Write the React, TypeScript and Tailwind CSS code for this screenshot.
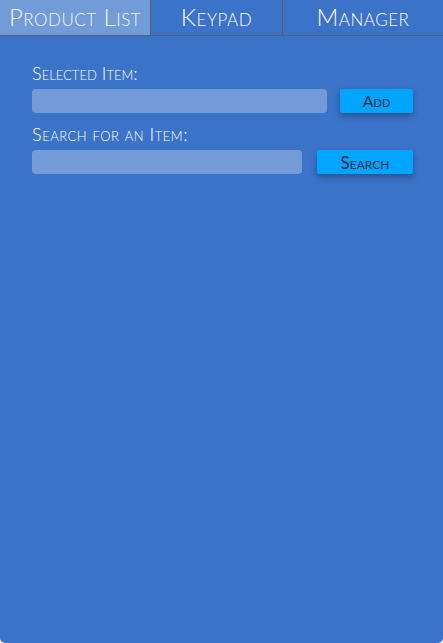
export default function App() {
  const font = { fontFamily: "Lato, 'DejaVu Sans', sans-serif" };
  return (
    <main
      className="w-[443px] h-[643px] bg-[#3b73c8] rounded-b-[5px] overflow-hidden text-white flex flex-col"
      style={font}
    >
      <nav className="flex h-[36px] border-b border-[#5a5f6a]">
        <div className="w-[151px] bg-[#729cd8] border-r border-[#5a5f6a] flex items-center justify-center pb-[2px] text-[24px] tracking-[0.5px] font-light [font-variant:small-caps] text-[#f4f7fc]">
          Product List
        </div>
        <div className="w-[132px] border-r border-[#5a5f6a] flex items-center justify-center pb-[2px] text-[24px] tracking-[0.5px] font-light [font-variant:small-caps]">
          Keypad
        </div>
        <div className="flex-1 flex items-center justify-center pb-[2px] text-[24px] tracking-[0.5px] font-light [font-variant:small-caps]">
          Manager
        </div>
      </nav>

      <section className="pl-8 pr-[30px] pt-[25px] flex flex-col">
        <label className="text-[18px] font-light [font-variant:small-caps] leading-[24px]">
          Selected Item:
        </label>
        <div className="flex items-center gap-[13px] mt-[4px]">
          <input className="flex-1 h-[24px] rounded-[4px] bg-[#729bd8] outline-none" />
          <button className="w-[73px] h-[24px] rounded-[2px] bg-[#00a5ff] text-[#1b2a40] text-[16px] [font-variant:small-caps] shadow-[0_3px_6px_rgba(0,0,0,0.3)]">
            Add
          </button>
        </div>
        <label className="text-[18px] font-light tracking-[0.5px] [font-variant:small-caps] leading-[24px] mt-[9px]">
          Search for an Item:
        </label>
        <div className="flex items-center gap-[15px] mt-[4px]">
          <input className="flex-1 h-[24px] rounded-[4px] bg-[#729bd8] outline-none" />
          <button className="w-[96px] h-[24px] rounded-[2px] bg-[#00a5ff] text-[#1b2a40] text-[17px] [font-variant:small-caps] shadow-[0_3px_6px_rgba(0,0,0,0.3)]">
            Search
          </button>
        </div>
      </section>
    </main>
  );
}
